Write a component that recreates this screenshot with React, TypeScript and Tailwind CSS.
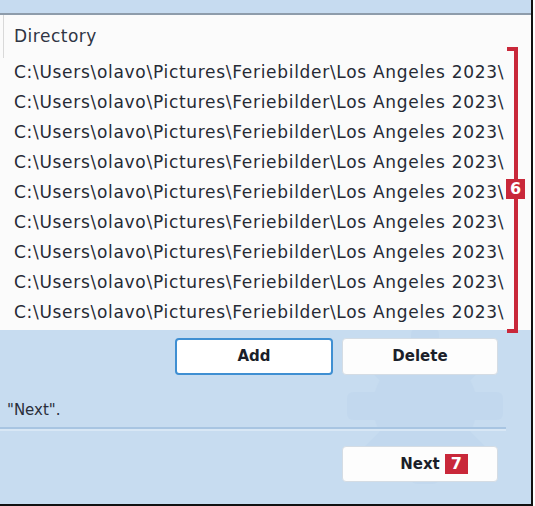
import React from "react"

const path = "C:\\Users\\olavo\\Pictures\\Feriebilder\\Los Angeles 2023\\"
const rows = Array.from({ length: 9 }, () => path)

function Watermark() {
  // faint gear-ish shape in the dialog background
  const teeth = Array.from({ length: 8 }, (_, i) => i * 45)
  return (
    <svg
      className="absolute left-[300px] top-[318px] pointer-events-none"
      width="240"
      height="180"
      viewBox="0 0 240 180"
    >
      <g fill="#b9d2ec" opacity="0.3" transform="translate(125 88)">
        <circle r="52" />
        {teeth.map((a) => (
          <rect key={a} x="-14" y="-78" width="28" height="34" rx="6" transform={`rotate(${a})`} />
        ))}
      </g>
    </svg>
  )
}

export default function App() {
  return (
    <div
      className="relative w-[535px] h-[506px] bg-white overflow-hidden"
      style={{ fontFamily: '"DejaVu Sans", Verdana, sans-serif' }}
    >
      <div className="relative w-[533px] h-[506px] bg-[#c7dcf0] border-r-2 border-b-2 border-[#111]">
        <Watermark />

        {/* top strip of the dialog */}
        <div className="h-[13px] bg-[#c6dbf0]" />
        <div className="h-[2px] bg-[#8e9cab]" />

        {/* directory list */}
        <div className="relative h-[315px] bg-[#fbfbfb]">
          <div className="h-[43px] ml-[3px] border-l border-[#d9d9d9] pl-[10px] flex items-center text-[17px] tracking-[0.5px] text-[#2f3544]">
            Directory
          </div>
          {rows.map((r, i) => (
            <div
              key={i}
              className="h-[30px] pl-[14px] flex items-center text-[17px] tracking-[0.7px] text-[#262a35] whitespace-nowrap"
            >
              {r}
            </div>
          ))}

          {/* marker 6 */}
          <div className="absolute left-[507px] top-[32px] w-[11px] h-[286px] border-t-4 border-r-4 border-b-4 border-[#c9283a]" />
          <div className="absolute left-[506px] top-[164px] w-[19px] h-[20px] bg-[#c9283a] text-white font-bold text-[16px] leading-[20px] text-center">
            6
          </div>
        </div>

        <div className="relative flex gap-[9px] pl-[175px] mt-[8px]">
          <button className="w-[158px] h-[37px] rounded-[4px] bg-white border-2 border-[#3f8fd2] font-bold text-[15px] text-[#1b1f2a]">
            Add
          </button>
          <button className="w-[156px] h-[37px] rounded-[4px] bg-[#fdfdfd] border border-[#d4dce4] font-bold text-[15px] text-[#1b1f2a]">
            Delete
          </button>
        </div>

        <p className="relative mt-[25px] pl-[7px] text-[15px] leading-[20px] text-[#2a2e3a]">"Next".</p>

        <div className="relative mt-[7px] w-[506px] h-[2px] bg-[#a8c5e2]" />
        <div className="relative w-[506px] h-[2px] bg-[#d8e7f5]" />

        <div className="relative mt-[15px] pl-[342px]">
          <button className="w-[156px] h-[36px] rounded-[4px] bg-[#fdfdfd] border border-[#d4dce4] font-bold text-[15px] text-[#1b1f2a] flex items-center justify-center">
            <span className="relative">
              Next
              <span className="absolute left-[calc(100%+5px)] top-1/2 -translate-y-1/2 w-[23px] h-[20px] bg-[#c9283a] text-white text-[16px] leading-[20px] text-center">
                7
              </span>
            </span>
          </button>
        </div>
      </div>
    </div>
  )
}
